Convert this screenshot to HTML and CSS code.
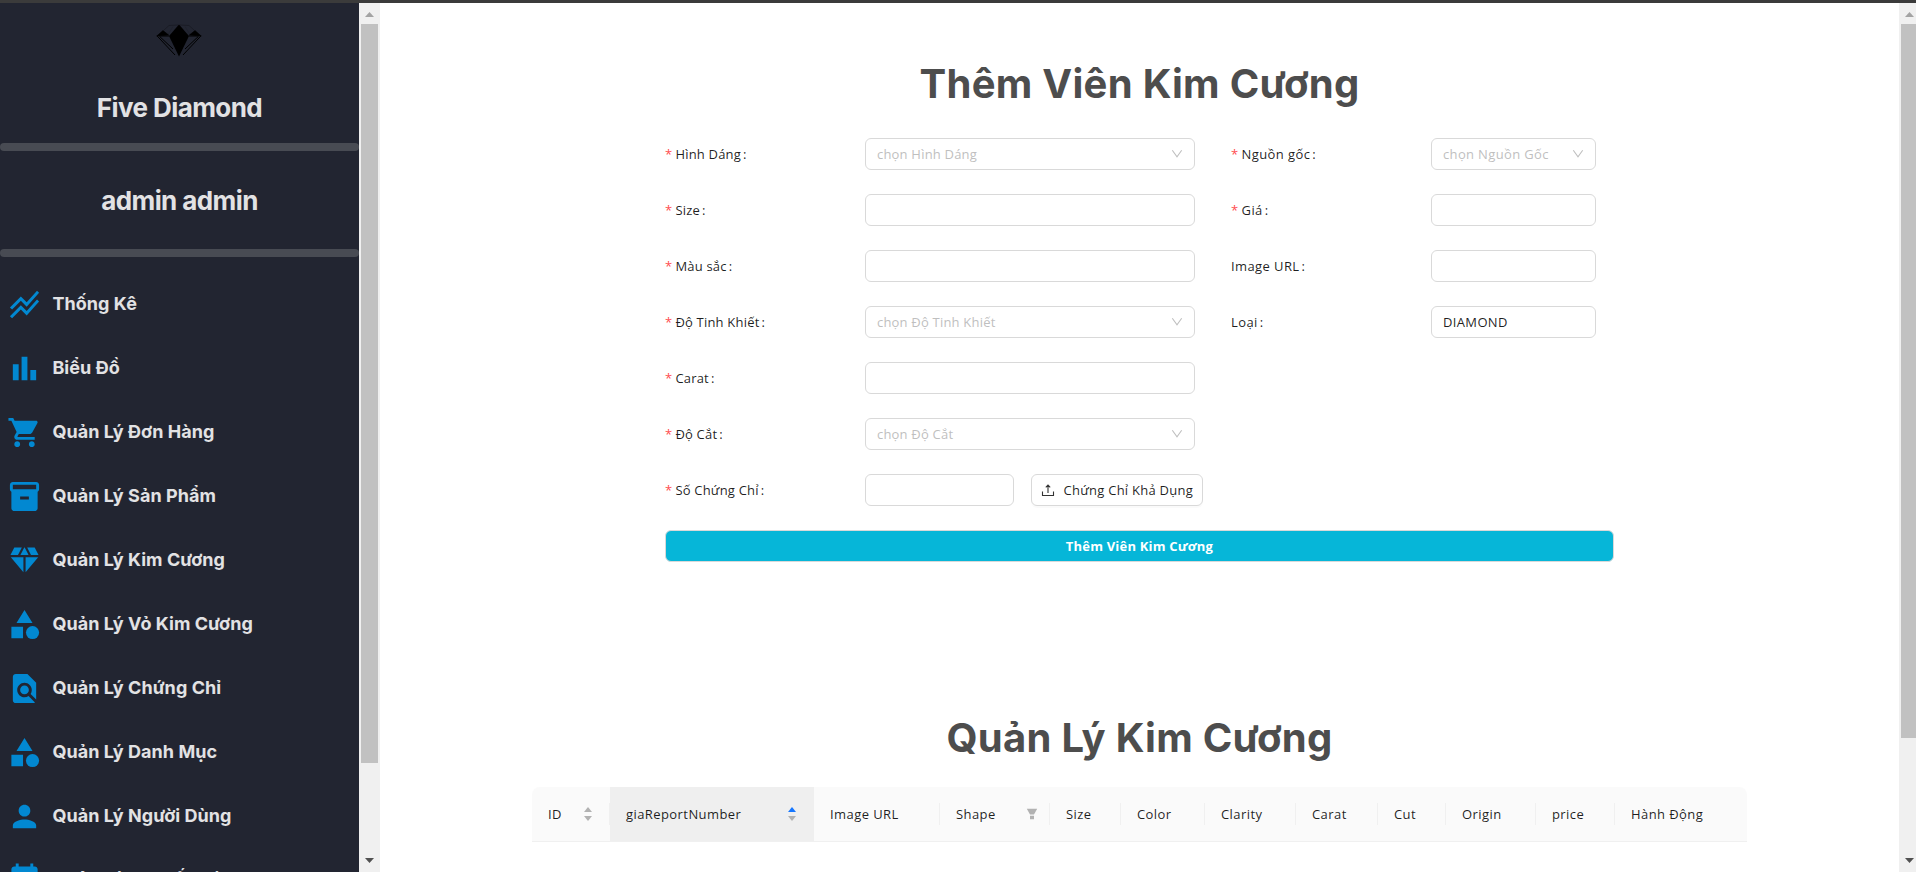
FILE: index.html
```html
<!DOCTYPE html>
<html lang="vi">
<head>
<meta charset="utf-8">
<title>Five Diamond</title>
<link rel="stylesheet" href="styles.css">
</head>
<body>
<div class="topline"></div>
<div class="app">
  <aside class="sidebar">
    <svg class="logo" viewBox="0 0 46 33">
      <path d="M23 .5 33 12 23 32.500 13 12z" fill="#000"/>
      <path d="M7 6.500 12.600 11 .8 12zM39 6.500 33.400 11 45.200 12z" fill="#000" stroke="#000" stroke-width=".6"/>
      <path d="M1 11.800 19 31M45 11.800 27 31M3 12H13M33 12h10M4 12.800 17 25M42 12.800 29 25" fill="none" stroke="#000" stroke-width="1"/>
      <path d="M8 6 13 1.500 22 1M38 6 33 1.500 24 1" fill="none" stroke="#000" stroke-opacity=".3" stroke-width=".8"/>
      <path d="M17 2.500 12 10.500M29 2.500 34 10.500" fill="none" stroke="#000" stroke-opacity=".15" stroke-width=".7"/>
    </svg>
    <h2 class="brand">Five Diamond</h2>
    <div class="rule"></div>
    <h2 class="user">admin admin</h2>
    <div class="rule"></div>
    <nav class="nav">
      <a class="item"><svg viewBox="0 0 24 24"><path d="M2 19.990l7.500-7.510 4 4 7.090-7.970L22 9.920l-8.500 9.560-4-4-6 6.010-1.500-1.500zm1.500-4.500l6-6.010 4 4L22 3.920l-1.410-1.410-7.090 7.970-4-4L2 13.990l1.500 1.500z"/></svg><span>Thống Kê</span></a>
      <a class="item"><svg viewBox="0 0 24 24"><path d="M4 9h4v11H4zm12 4h4v7h-4zm-6-9h4v16h-4z"/></svg><span>Biểu Đồ</span></a>
      <a class="item"><svg viewBox="0 0 24 24"><path d="M7 18c-1.100 0-1.990.9-1.990 2S5.900 22 7 22s2-.9 2-2-.9-2-2-2zM1 2v2h2l3.600 7.590-1.350 2.450c-.16.28-.25.61-.25.96 0 1.100.9 2 2 2h12v-2H7.420c-.14 0-.25-.11-.25-.25l.03-.12.9-1.630h7.450c.75 0 1.410-.41 1.750-1.030l3.580-6.490c.08-.14.12-.31.12-.48 0-.55-.45-1-1-1H5.210l-.94-2H1zm16 16c-1.100 0-1.990.9-1.990 2s.89 2 1.990 2 2-.9 2-2-.9-2-2-2z"/></svg><span>Quản Lý Đơn Hàng</span></a>
      <a class="item"><svg viewBox="0 0 24 24"><path d="M20 2H4c-1 0-2 .9-2 2v3.010c0 .72.43 1.340 1 1.690V20c0 1.100 1.100 2 2 2h14c.9 0 2-.9 2-2V8.700c.57-.35 1-.97 1-1.690V4c0-1.100-1-2-2-2zm-5 12H9v-2h6v2zm5-7H4V4h16v3z"/></svg><span>Quản Lý Sản Phẩm</span></a>
      <a class="item"><svg viewBox="0 0 24 24"><path d="M12.160 3h-.32L9.210 8.250h5.580zm4.300 5.250h5.160L19 3h-5.160zm4.920 1.500h-8.630V20.100zM11.250 20.100V9.750H2.620zM7.540 8.250 10.160 3H5L2.380 8.250z"/></svg><span>Quản Lý Kim Cương</span></a>
      <a class="item"><svg viewBox="0 0 24 24"><path d="m12 2-5.500 9h11zM3 13.500h8v8H3z"/><circle cx="17.500" cy="17.500" r="4.500"/></svg><span>Quản Lý Vỏ Kim Cương</span></a>
      <a class="item"><svg viewBox="0 0 24 24"><path d="M20 19.590V8l-6-6H6c-1.100 0-1.990.9-1.990 2L4 20c0 1.100.89 2 1.990 2H18c.45 0 .85-.15 1.190-.4l-4.430-4.430c-.8.52-1.740.83-2.760.83-2.760 0-5-2.240-5-5s2.240-5 5-5 5 2.240 5 5c0 1.020-.31 1.960-.83 2.750L20 19.590zM9 13c0 1.660 1.340 3 3 3s3-1.340 3-3-1.340-3-3-3-3 1.340-3 3z"/></svg><span>Quản Lý Chứng Chỉ</span></a>
      <a class="item"><svg viewBox="0 0 24 24"><path d="m12 2-5.500 9h11zM3 13.500h8v8H3z"/><circle cx="17.500" cy="17.500" r="4.500"/></svg><span>Quản Lý Danh Mục</span></a>
      <a class="item"><svg viewBox="0 0 24 24"><path d="M12 12c2.210 0 4-1.790 4-4s-1.790-4-4-4-4 1.790-4 4 1.790 4 4 4zm0 2c-2.670 0-8 1.340-8 4v2h16v-2c0-2.660-5.330-4-8-4z"/></svg><span>Quản Lý Người Dùng</span></a>
      <a class="item"><svg viewBox="0 0 24 24"><path d="M17 12h-5v5h5v-5zM16 1v2H8V1H6v2H5c-1.110 0-1.990.9-1.990 2L3 19c0 1.100.89 2 2 2h14c1.100 0 2-.9 2-2V5c0-1.100-.9-2-2-2h-1V1h-2z"/></svg><span>Quản Lý Chuyến Giao</span></a>
    </nav>
  </aside>
  <div class="scroll scroll-side">
    <svg class="arrow up" viewBox="0 0 9 5"><path d="M4.500 0 9 5H0z"/></svg>
    <div class="thumb"></div>
    <svg class="arrow down" viewBox="0 0 9 5"><path d="M0 0h9L4.500 5z"/></svg>
  </div>

  <main class="main">
    <h1 class="title">Thêm Viên Kim Cương</h1>
    <form class="form">
      <div class="columns">
        <div class="col col-a">
          <div class="row"><label class="req">Hình Dáng</label><div class="box select"><span>chọn Hình Dáng</span><svg viewBox="0 0 12 12"><path d="M1.300 2.200 6 8.800l4.700-6.600"/></svg></div></div>
          <div class="row"><label class="req">Size</label><div class="box"></div></div>
          <div class="row"><label class="req">Màu sắc</label><div class="box"></div></div>
          <div class="row"><label class="req">Độ Tinh Khiết</label><div class="box select"><span>chọn Độ Tinh Khiết</span><svg viewBox="0 0 12 12"><path d="M1.300 2.200 6 8.800l4.700-6.600"/></svg></div></div>
          <div class="row"><label class="req">Carat</label><div class="box"></div></div>
          <div class="row"><label class="req">Độ Cắt</label><div class="box select"><span>chọn Độ Cắt</span><svg viewBox="0 0 12 12"><path d="M1.300 2.200 6 8.800l4.700-6.600"/></svg></div></div>
          <div class="row"><label class="req">Số Chứng Chỉ</label><div class="box short"></div><div class="box upload"><svg viewBox="0 0 14 14"><path d="M1.500 8.500v4h11v-4M7 10V2.200M4.800 4.400 7 2l2.200 2.400"/></svg><span>Chứng Chỉ Khả Dụng</span></div></div>
        </div>
        <div class="col col-b">
          <div class="row"><label class="req">Nguồn gốc</label><div class="box select"><span>chọn Nguồn Gốc</span><svg viewBox="0 0 12 12"><path d="M1.300 2.200 6 8.800l4.700-6.600"/></svg></div></div>
          <div class="row"><label class="req">Giá</label><div class="box"></div></div>
          <div class="row"><label>Image URL</label><div class="box"></div></div>
          <div class="row"><label>Loại</label><div class="box">DIAMOND</div></div>
        </div>
      </div>
      <div class="submit">Thêm Viên Kim Cương</div>
    </form>

    <h1 class="title title-list">Quản Lý Kim Cương</h1>
    <div class="table">
      <div class="th"><span>ID</span><svg class="sorter" viewBox="0 0 12 16"><path d="M6 1 10 6H2z"/><path d="M2 10h8l-4 5z"/></svg></div>
      <div class="th sorted"><span>giaReportNumber</span><svg class="sorter" viewBox="0 0 12 16"><path class="on" d="M6 1 10 6H2z"/><path d="M2 10h8l-4 5z"/></svg></div>
      <div class="th">Image URL</div>
      <div class="th"><span>Shape</span><svg class="filter" viewBox="0 0 12 12"><path d="M.8.8h10.400L8 6.600H4zM4 7.800h4v3.400H4z"/></svg></div>
      <div class="th">Size</div>
      <div class="th">Color</div>
      <div class="th">Clarity</div>
      <div class="th">Carat</div>
      <div class="th">Cut</div>
      <div class="th">Origin</div>
      <div class="th">price</div>
      <div class="th">Hành Động</div>
    </div>
  </main>
  <div class="scroll scroll-page">
    <svg class="arrow up" viewBox="0 0 9 5"><path d="M4.500 0 9 5H0z"/></svg>
    <div class="thumb"></div>
    <svg class="arrow down" viewBox="0 0 9 5"><path d="M0 0h9L4.500 5z"/></svg>
  </div>
</div>
</body>
</html>
```

FILE: styles.css
```css
* { box-sizing: border-box; }
body {
  margin: 0;
  height: 872px;
  overflow: hidden;
  background: #fff;
  font-family: "Open Sans", "Noto Sans", sans-serif;
  font-size: 13px;
  letter-spacing: .2px;
  color: rgba(0, 0, 0, .88);
}
.topline { height: 3px; background: #3b3b3b; }
.app { display: flex; height: 869px; }

/* Sidebar */
.sidebar {
  width: 359px;
  flex: none;
  overflow: hidden;
  display: flex;
  flex-direction: column;
  background: #222531;
  font-family: Inter, sans-serif;
  letter-spacing: 0;
  color: #e2e2e4;
}
.logo { width: 46px; height: 33px; margin: 21px 0 0 156px; flex: none; }
.brand, .user {
  margin: 0;
  font-size: 26px;
  font-weight: 700;
  line-height: 32px;
  letter-spacing: -.58px;
  text-align: center;
  flex: none;
}
.brand { margin-top: 35px; margin-bottom: 16px; height: 35px; }
.user { height: 98px; padding-top: 34px; }
.rule { height: 8px; border-radius: 4px; background: #484b53; flex: none; }
.nav { display: flex; flex-direction: column; padding-top: 16px; }
.item {
  display: flex;
  align-items: center;
  gap: 10.4px;
  height: 63.9px;
  padding-left: 7px;
  flex: none;
  font-size: 18px;
  font-weight: 700;
  letter-spacing: .06px;
  white-space: nowrap;
}
.item svg { width: 35px; height: 35px; fill: #0288d1; }
.item span { padding-bottom: 2px; }

/* Scrollbars */
.scroll {
  display: flex;
  flex-direction: column;
  flex: none;
  background: #f0f0f0;
  padding: 9px 2px 0;
}
.scroll-side { width: 21px; }
.scroll-page { width: 17px; padding-right: 0; }
.thumb { background: #c1c1c1; }
.scroll-side .thumb { height: 739px; }
.scroll-page .thumb { height: 714px; }
.arrow { width: 9px; height: 5px; margin-left: 4px; flex: none; }
.up { fill: #a3a3a3; margin-bottom: 7px; }
.down { fill: #505050; margin-top: auto; margin-bottom: 9px; }

/* Page body */
.main { flex: 1; min-width: 0; }
.title {
  margin: 57px 0 0;
  font-family: Inter, sans-serif;
  font-size: 40px;
  font-weight: 700;
  line-height: 48px;
  letter-spacing: .28px;
  color: #4d4d4d;
  text-align: center;
}
.form { width: 949px; margin: 30px 0 0 285px; }
.columns { display: flex; gap: 36px; }
.col { display: flex; flex-direction: column; gap: 24px; }
.col-a { width: 530px; }
.col-b { width: 365px; }
.row { display: flex; height: 32px; align-items: center; }
.row label {
  width: 200px;
  flex: none;
  white-space: nowrap;
}
.row label::after { content: ":"; margin-left: 2px; }
.req::before { content: "*"; margin-right: 3px; color: #ff4d4f; }
.col-b label { letter-spacing: .4px; }
.col-b .box { letter-spacing: .35px; }
.box {
  flex: 1;
  display: flex;
  align-items: center;
  height: 32px;
  padding: 0 11px;
  border: 1px solid #d9d9d9;
  border-radius: 6px;
  background: #fff;
  white-space: nowrap;
}
.select { justify-content: space-between; color: #bfbfbf; }
.select svg { width: 12px; height: 12px; fill: none; stroke: #bfbfbf; stroke-width: 1.1; }
.short { flex: none; width: 149px; }
.upload {
  flex: none;
  width: 172px;
  margin: 0 -10px 0 17px;
  padding: 0 9px;
  justify-content: space-between;
  letter-spacing: .25px;
  box-shadow: 0 2px 0 rgba(0, 0, 0, .02);
}
.upload svg { width: 14px; height: 14px; fill: none; stroke: #333; stroke-width: 1.1; }
.submit {
  margin-top: 24px;
  height: 32px;
  line-height: 30px;
  border: 1px solid #d9d9d9;
  border-radius: 6px;
  background: #06b6d8;
  color: #fff;
  font-weight: 700;
  text-align: center;
}
.title-list { margin-top: 152px; }

/* Table header */
.table {
  display: grid;
  grid-template-columns: 78px 204px 126px 110px 71px 84px 91px 82px 68px 90px 79px 132px;
  width: 1215px;
  height: 55px;
  margin: 25px 0 0 152px;
  overflow: hidden;
  border-radius: 8px 8px 0 0;
  border-bottom: 1px solid #f0f0f0;
  background: linear-gradient(#fafafa, #fafafa);
}
.th {
  display: flex;
  align-items: center;
  justify-content: space-between;
  padding: 0 16px;
  font-weight: 500;
  letter-spacing: .42px;
  white-space: nowrap;
  background: linear-gradient(#f0f0f0, #f0f0f0) right center / 1px 22px no-repeat;
}
.th:last-child { background: none; }
.th.sorted { background: #efefef; }
.sorter { width: 12px; height: 16px; fill: #b2b2b2; }
.sorter .on { fill: #1677ff; }
.filter { width: 12px; height: 12px; fill: #b2b2b2; margin-right: -4px; }
```
